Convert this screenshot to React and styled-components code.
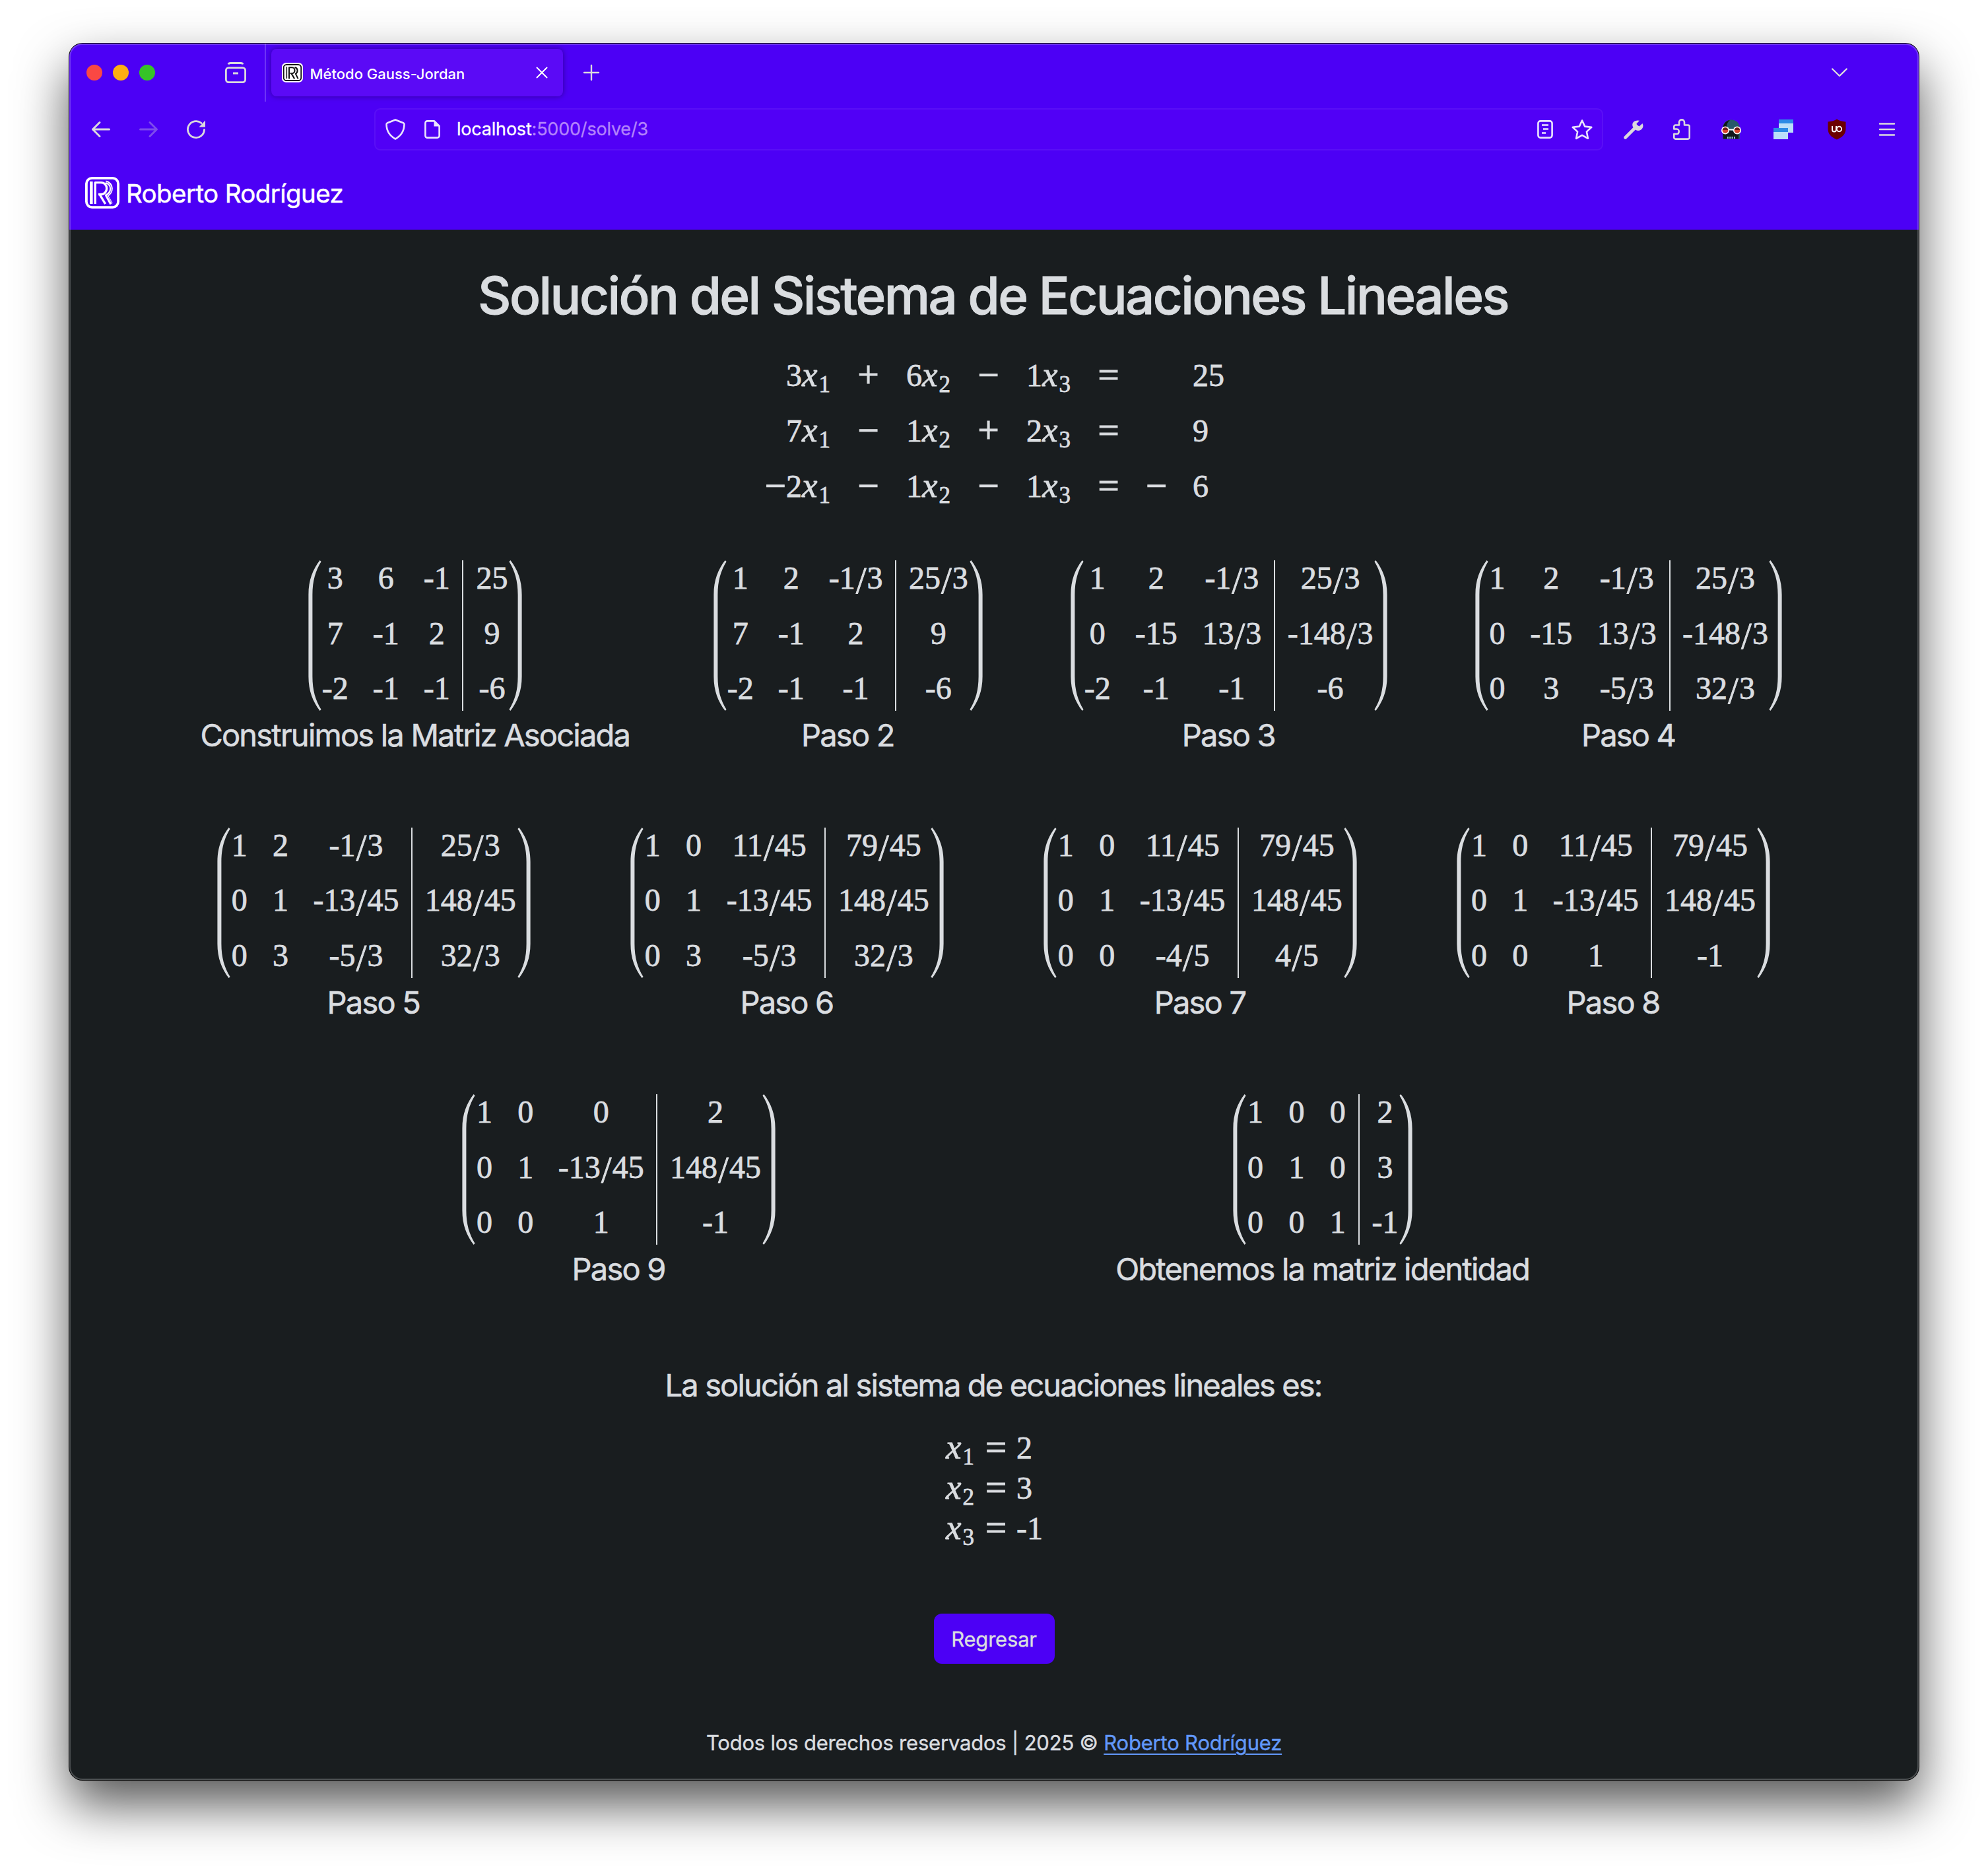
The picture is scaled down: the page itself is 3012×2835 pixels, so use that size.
import React from "react";
import styled, { createGlobalStyle, css } from "styled-components";

const GlobalStyle = createGlobalStyle`
  * { box-sizing: border-box; }
  html, body { margin: 0; padding: 0; background: #fff; }
  body { width: 3012px; height: 2835px; overflow: hidden; }
`;

const sans = css`font-family: Inter, "Liberation Sans", sans-serif;`;
const serif = css`font-family: "Liberation Serif", serif;`;
const purple = "#4c00f5";
const ink = "#dadde0";

/* ---------- window ---------- */
const Desktop = styled.div`
  width: 3012px;
  height: 2835px;
  padding: 66px 105px 138px;
`;
const Window = styled.div`
  position: relative;
  width: 2802px;
  height: 2631px;
  display: flex;
  flex-direction: column;
  border-radius: 20px;
  background: #191d1f;
  box-shadow: 0 0 0 1px #000, 0 37px 78px rgba(0, 0, 0, 0.67);
  ${sans}
  &::after {
    content: "";
    position: absolute;
    inset: 0;
    border-radius: 20px;
    box-shadow: inset 0 0 0 2px rgba(255, 255, 255, 0.22);
    pointer-events: none;
  }
`;
const Chrome = styled.header`
  background: ${purple};
  border-radius: 20px 20px 0 0;
  height: 170px;
`;
const TabStrip = styled.div`
  height: 88px;
  display: flex;
  align-items: center;
  padding: 0 108px 0 26px;
`;
const Lights = styled.div`
  display: flex;
  gap: 16px;
`;
const Light = styled.span`
  width: 24px;
  height: 24px;
  border-radius: 50%;
  background: ${(p) => p.$color};
`;
const Separator = styled.span`
  width: 2px;
  height: 88px;
  margin: 0 8px 0 28px;
  background: rgba(255, 255, 255, 0.2);
`;
const Tab = styled.div`
  width: 442px;
  height: 72px;
  display: flex;
  align-items: center;
  padding: 0 24px 0 16px;
  border-radius: 8px;
  background: #5b0af6;
  box-shadow: 0 0 8px rgba(0, 0, 0, 0.38);
  color: #fff;
  font-size: 22px;
  font-weight: 500;
`;
const TabTitle = styled.span`
  flex: 1;
  margin-left: 10.5px;
  line-height: 28px;
  padding-top: 3px;
`;
const Toolbar = styled.div`
  height: 84px;
  display: flex;
  align-items: center;
  padding: 0 36px 0 34px;
`;
const AddressBar = styled.div`
  width: 1862px;
  height: 64px;
  margin-left: 256px;
  display: flex;
  align-items: center;
  padding: 0 14px 0 15px;
  border: 2px solid #5a0ff6;
  border-radius: 9px;
  background: #5100f6;
`;
const Url = styled.span`
  flex: 1;
  margin-left: 25px;
  font-size: 27px;
  line-height: 36px;
  color: #b384fb;
  letter-spacing: -0.2px;
  white-space: nowrap;
  -webkit-text-stroke: 0.3px currentColor;
`;
const Host = styled.span`
  color: #fff;
`;
const Icon = styled.svg`
  display: block;
  flex: none;
  width: ${(p) => p.$w}px;
  height: ${(p) => p.$h}px;
  margin-left: ${(p) => p.$left || 0};
  fill: none;
  stroke: ${(p) => p.$color || "#dcd9dd"};
  stroke-width: ${(p) => p.$stroke || 2.6};
  stroke-linecap: round;
  stroke-linejoin: round;
  opacity: ${(p) => p.$opacity || 1};
  overflow: visible;
`;
const Glyph = ({ w, h, children, ...rest }) => (
  <Icon viewBox={`0 0 ${w} ${h}`} $w={w} $h={h} {...rest}>{children}</Icon>
);

/* ---------- page ---------- */
const Navbar = styled.nav`
  height: 112px;
  display: flex;
  align-items: center;
  gap: 10px;
  padding-left: 24px;
  background: ${purple};
`;
const Brand = styled.span`
  color: #fff;
  font-size: 38.5px;
  line-height: 48px;
  letter-spacing: -0.6px;
  padding-top: 1px;
  -webkit-text-stroke: 0.5px #fff;
`;
const Main = styled.main`
  display: flex;
  flex-direction: column;
  align-items: center;
  color: ${ink};
`;
const Title = styled.h1`
  margin: 51.5px 0 31px;
  padding-right: 3px;
  font-size: 78px;
  line-height: 96px;
  font-weight: 500;
  letter-spacing: -2.55px;
  white-space: nowrap;
  -webkit-text-stroke: 0.9px ${ink};
`;
const System = styled.div`
  display: grid;
  grid-template-columns: 104px 111px 71px 111px 71px 111px 34px 87px;
  grid-auto-rows: 84px;
  line-height: 84px;
  margin-bottom: 70.5px;
  font-size: 48px;
  -webkit-text-stroke: 0.8px ${ink};
  ${serif}
`;
const Term = styled.span`
  white-space: nowrap;
  text-align: ${(p) => p.$align || "center"};
  padding-right: ${(p) => (p.$align === "right" ? 2 : 0)}px;
  padding-left: ${(p) => p.$pad || 0}px;
`;
const Sign = styled.span`
  font-size: 57px;
  line-height: 0;
  vertical-align: -2px;
  -webkit-text-stroke-width: 1.2px;
`;
const Var = styled.i`
  font-size: 53px;
  line-height: 0;
  letter-spacing: 2px;
`;
const Sub = styled.span`
  font-size: 35px;
  line-height: 0;
  vertical-align: -9px;
`;

const Steps = styled.section`
  width: 2640px;
  display: flex;
  flex-direction: column;
  gap: 110.5px;
`;
const StepRow = styled.div`
  display: flex;
  justify-content: space-evenly;
`;
const Step = styled.figure`
  margin: 0;
  display: flex;
  flex-direction: column;
  align-items: center;
`;
const Caption = styled.figcaption`
  margin-top: 8px;
  padding-right: 2px;
  font-size: 47px;
  line-height: 58px;
  letter-spacing: -1.78px;
  white-space: nowrap;
  -webkit-text-stroke: 0.6px ${ink};
`;
const MatrixBox = styled.div`
  height: 228px;
  display: flex;
  margin: 0 8.5px 0 7px;
  ${serif}
  font-size: 48px;
  -webkit-text-stroke: 0.8px ${ink};
`;
const Cells = styled.div`
  display: grid;
  grid-template-columns: ${(p) => p.$cols};
  grid-auto-rows: 53.6px;
  gap: 30.1px 38.4px;
  line-height: 53.6px;
`;
const Cell = styled.span`
  display: flex;
  justify-content: center;
  white-space: nowrap;
`;
const Slash = styled.span`
  font-size: 57px;
  margin: 4px 1px 0;
`;
const Rule = styled.span`
  width: 2px;
  margin: 0 19.2px;
  background: ${ink};
`;
const ParenSvg = styled.svg`
  width: 20px;
  height: 228px;
  fill: ${ink};
  stroke: none;
  margin: ${(p) => (p.$flip ? "0 0 0 2px" : "0 2px 0 0")};
  transform: ${(p) => (p.$flip ? "scaleX(-1)" : "none")};
`;
const Lead = styled.p`
  margin: 117.5px 0 35px;
  padding-right: 2px;
  font-size: 47px;
  line-height: 58px;
  letter-spacing: -1.85px;
  -webkit-text-stroke: 0.6px ${ink};
`;
const Answers = styled.div`
  width: 146px;
  font-size: 48px;
  line-height: 61.2px;
  -webkit-text-stroke: 0.8px ${ink};
  ${serif}
`;
const Answer = styled.div`
  display: grid;
  grid-template-columns: 60px 47px auto;
  height: 61.2px;
  white-space: nowrap;
`;
const Button = styled.button`
  ${sans}
  width: 183px;
  height: 76px;
  margin: 99px 0 96px;
  padding: 0;
  border: 0;
  border-radius: 12px;
  background: ${purple};
  color: ${ink};
  font-size: 31px;
  letter-spacing: -0.2px;
  -webkit-text-stroke: 0.4px ${ink};
`;
const Footer = styled.footer`
  font-size: 31px;
  line-height: 48px;
  letter-spacing: -0.2px;
  white-space: nowrap;
  -webkit-text-stroke: 0.4px currentColor;
`;
const Link = styled.a`
  color: #6298f9;
  text-decoration: underline;
  text-decoration-thickness: 2px;
  text-underline-offset: 5px;
`;

const Paren = ({ flip }) => (
  <ParenSvg viewBox="0 0 20 228" $flip={flip}>
    <path d="M17.6 0C7 14 0.4 30 0.4 52V176C0.4 198 7 214 17.6 228L19.6 226C11 212 6.4 197 6.4 176V52C6.4 31 11 16 19.6 2Z" />
  </ParenSvg>
);

const advance = { "-": 14.6, "/": 17.6 };
const measure = (t) => [...t].reduce((n, c) => n + (advance[c] || 24), 0);
const columns = (rows, from, to) => {
  const out = [];
  for (let i = from; i < to; i++) out.push(`${Math.max(...rows.map((r) => measure(r[i])))}px`);
  return out.join(" ");
};
const Entry = ({ text }) => {
  const [a, b] = text.split("/");
  return <Cell>{a}{b && <Slash>/</Slash>}{b}</Cell>;
};
const Matrix = ({ data }) => {
  const rows = data.split(";").map((r) => r.split(" "));
  return (
    <MatrixBox>
      <Paren />
      <Cells $cols={columns(rows, 0, 3)}>
        {rows.flatMap((r, i) => r.slice(0, 3).map((t, j) => <Entry key={`${i}${j}`} text={t} />))}
      </Cells>
      <Rule />
      <Cells $cols={columns(rows, 3, 4)}>
        {rows.map((r, i) => <Entry key={i} text={r[3]} />)}
      </Cells>
      <Paren flip />
    </MatrixBox>
  );
};

const steps = [
  [
    ["3 6 -1 25;7 -1 2 9;-2 -1 -1 -6", "Construimos la Matriz Asociada"],
    ["1 2 -1/3 25/3;7 -1 2 9;-2 -1 -1 -6", "Paso 2"],
    ["1 2 -1/3 25/3;0 -15 13/3 -148/3;-2 -1 -1 -6", "Paso 3"],
    ["1 2 -1/3 25/3;0 -15 13/3 -148/3;0 3 -5/3 32/3", "Paso 4"],
  ],
  [
    ["1 2 -1/3 25/3;0 1 -13/45 148/45;0 3 -5/3 32/3", "Paso 5"],
    ["1 0 11/45 79/45;0 1 -13/45 148/45;0 3 -5/3 32/3", "Paso 6"],
    ["1 0 11/45 79/45;0 1 -13/45 148/45;0 0 -4/5 4/5", "Paso 7"],
    ["1 0 11/45 79/45;0 1 -13/45 148/45;0 0 1 -1", "Paso 8"],
  ],
  [
    ["1 0 0 2;0 1 -13/45 148/45;0 0 1 -1", "Paso 9"],
    ["1 0 0 2;0 1 0 3;0 0 1 -1", "Obtenemos la matriz identidad"],
  ],
];

const equations = [
  ["3", "+", "6", "−", "1", "", "25"],
  ["7", "−", "1", "+", "2", "", "9"],
  ["−2", "−", "1", "−", "1", "−", "6"],
];

const Unknown = ({ n }) => <><Var>x</Var><Sub>{n}</Sub></>;

const Equation = ({ e }) => (
  <>
    <Term $align="right">
      {e[0].startsWith("−") ? <><Sign>−</Sign>{e[0].slice(1)}</> : e[0]}<Unknown n="1" />
    </Term>
    <Term><Sign>{e[1]}</Sign></Term>
    <Term $align="right">{e[2]}<Unknown n="2" /></Term>
    <Term><Sign>{e[3]}</Sign></Term>
    <Term $align="right">{e[4]}<Unknown n="3" /></Term>
    <Term><Sign>=</Sign></Term>
    <Term><Sign>{e[5]}</Sign></Term>
    <Term $align="left" $pad={38}>{e[6]}</Term>
  </>
);

const Monogram = () => (
  <>
    <path d="M7 7h4.6v34H7z" fill="currentColor" stroke="none" />
    <path d="M15.2 41V8.6H24C35.5 8.6 35.5 26.5 24 26.5H20M22.5 27.5L30.6 41" strokeLinecap="butt" strokeWidth="3.4" />
    <path d="M31 7.8C42 10 42 24 32.5 28.2L39.6 41" strokeLinecap="butt" strokeWidth="4.8" />
    <path d="M30 7.4C42 9.4 42 24.6 33.6 28L41 41" stroke={purple} strokeLinecap="butt" strokeWidth="0.7" />
  </>
);

const LogoIcon = styled(Icon)`
  color: ${(p) => p.$color};
`;
const FavIcon = () => (
  <LogoIcon viewBox="0 0 52 48" $w={32} $h={30} $color="#141414" $stroke="3.5">
    <rect x="0" y="0" width="52" height="48" rx="10" fill="#fff" stroke="none" />
    <rect x="4.5" y="4.5" width="43" height="39" rx="7" strokeWidth="3" />
    <path d="M12 10.5V38" strokeWidth="2.4" />
    <path d="M18 38V11.5H25C34 11.5 34 26 25 26H22M24 27L30.5 38" strokeWidth="3.4" />
    <path d="M33 11.5C40 14 40 23 34 27L39.5 38" strokeWidth="3.4" />
  </LogoIcon>
);

export default function App() {
  return (
    <>
      <GlobalStyle />
      <Desktop>
        <Window>
          <Chrome>
            <TabStrip>
              <Lights>
                <Light $color="#fa4843" />
                <Light $color="#fdaf13" />
                <Light $color="#36c327" />
              </Lights>
              <Glyph w={32} h={32} $left="106px" $stroke={2.8}>
                <path d="M5 3.5C5.5 2 6 1.5 8 1.5H24C26 1.5 26.5 2 27 3.5" strokeLinecap="butt" />
                <rect x="1.4" y="8.6" width="29.2" height="22" rx="4" />
                <path d="M12 17h8" strokeLinecap="butt" strokeWidth="3" />
              </Glyph>
              <Separator />
              <Tab>
                <FavIcon />
                <TabTitle>Método Gauss-Jordan</TabTitle>
                <Glyph w={16} h={16} $color="#fff" $stroke={2}>
                  <path d="M0.5 0.5L15.5 15.5M15.5 0.5L0.5 15.5" />
                </Glyph>
              </Tab>
              <Glyph w={24} h={24} $left="31px" $stroke={2.4}>
                <path d="M12 1v22M1 12h22" />
              </Glyph>
              <Glyph w={24} h={12} $left="auto" $stroke={2.4}>
                <path d="M1.2 0.5L12 11L22.8 0.5" />
              </Glyph>
            </TabStrip>
            <Toolbar>
              <Glyph w={28} h={24} $stroke={3}>
                <path d="M26.5 12H2M12 1.5L1.5 12L12 22.5" />
              </Glyph>
              <Glyph w={28} h={24} $left="44px" $opacity={0.35} $stroke={3}>
                <path d="M1.5 12H26M16 1.5L26.5 12L16 22.5" />
              </Glyph>
              <Glyph w={28} h={28} $left="44px" $stroke={2.8}>
                <path d="M26.5 14.5A12.5 12.5 0 1 1 22 4.5" />
                <path d="M28 0.5V10.5H18.5Z" fill="#dcd9dd" stroke="none" />
              </Glyph>
              <AddressBar>
                <Glyph w={30} h={32} $color="#ebe4fd">
                  <path d="M15 1.5L27 6.3C28 6.7 28.6 7.5 28.5 8.5C28.3 18 25 25 15 30.5C5 25 1.7 18 1.5 8.5C1.4 7.5 2 6.7 3 6.3Z" />
                </Glyph>
                <Glyph w={24} h={28} $left="29px" $color="#ebe4fd">
                  <path d="M4.5 1.4H15L22.6 9V23.5A3 3 0 0 1 19.6 26.6H4.5A3 3 0 0 1 1.4 23.5V4.5A3 3 0 0 1 4.5 1.4Z" />
                  <path d="M14.5 1V9.5H23Z" fill="#ebe4fd" stroke="none" />
                </Glyph>
                <Url><Host>localhost</Host>:5000/solve/3</Url>
                <Glyph w={24} h={28} $color="#ebe4fd">
                  <rect x="1.4" y="1.4" width="21.2" height="25.2" rx="3.5" />
                  <path d="M7 7.5h10M9 13.5h8M7 19.5h6" strokeLinecap="butt" />
                </Glyph>
                <Glyph w={32} h={31} $left="28px" $color="#ebe4fd">
                  <path d="M16 1.5L20.2 10.6L30.3 11.8L22.9 18.6L24.9 28.8L16 23.8L7.1 28.8L9.1 18.6L1.7 11.8L11.8 10.6Z" />
                </Glyph>
              </AddressBar>
              <Glyph w={30} h={29} $left="31px">
                <path d="M2.5 26.5L17 12" strokeWidth="4.6" />
                <path d="M21 0.5C13 1 12 7 14.5 11L18.5 15C23 17.5 29 15 29.5 8.500L28.5 5L23.5 9.5L20 7L19.5 5.5L24 0.8Z" fill="#dcd9dd" stroke="none" />
              </Glyph>
              <Glyph w={26} h={32} $left="45px">
                <path d="M3.5 9.5H9V5.5C9 0 17 0 17 5.5V9.5H22.5A2.2 2.2 0 0 1 24.7 11.7V28.3A2.2 2.2 0 0 1 22.5 30.6H3.5A2.2 2.2 0 0 1 1.3 28.3V23H5.5C9.8 23 9.8 15.5 5.5 15.5H1.3V11.7A2.2 2.2 0 0 1 3.5 9.5Z" />
              </Glyph>
              <Glyph w={32} h={30} $left="46px">
                <g stroke="none">
                  <path d="M3 17C2 5 9 0.5 16 0.5S30 5 29 17V29.5H3Z" fill="#27596a" />
                  <path d="M3 16C3 8 7 2 14 1C9 5 9 10 9 14L27 21V29.5H4Z" fill="#10171b" />
                  <circle cx="7" cy="16.5" r="6" fill="#fff" />
                  <circle cx="25" cy="16.5" r="6" fill="#fff" />
                  <circle cx="7" cy="16.5" r="4.4" fill="#d8452c" />
                  <circle cx="25" cy="16.5" r="4.4" fill="#d8452c" />
                  <path d="M2.7 16A4.4 4.4 0 0 1 11.3 16ZM20.7 16A4.4 4.4 0 0 1 29.3 16Z" fill="#6b1c1b" />
                  <path d="M12 14.5h8v2h-8z" fill="#fff" />
                  <path d="M10 26h1.8v3H10zM13.3 26h1.8v3h-1.800zM16.6 26h1.8v3h-1.800zM20 26h1.8v3H20z" fill="#9fd4dd" />
                </g>
              </Glyph>
              <Glyph w={30} h={30} $left="48px">
                <g stroke="none">
                  <path d="M8 0h22v20H8z" fill="#bbdff9" />
                  <path d="M8 0h22v6H8z" fill="#2b8be6" />
                  <path d="M0 13h22v17H0z" fill="#bbdff9" />
                  <path d="M0 13h22v6H0z" fill="#2b8be6" />
                </g>
              </Glyph>
              <Glyph w={28} h={32} $left="52px">
                <path d="M14 0.5C18 3.5 23 4 27.5 4.500V15C27.5 23 23 27.5 14 31.5C5 27.5 0.5 23 0.5 15V4.5C5 4 10 3.5 14 0.5Z" fill="#6c0000" stroke="none" />
                <path d="M7 11V16.5A3 3 0 0 0 13 16.5V11" stroke="#fff" strokeWidth="1.9" strokeLinecap="butt" />
                <circle cx="17.5" cy="15.5" r="3.7" stroke="#fff" strokeWidth="1.9" />
              </Glyph>
              <Glyph w={24} h={20} $left="50px" $stroke={2.4}>
                <path d="M1 1.5h22M1 10h22M1 18.5h22" />
              </Glyph>
            </Toolbar>
          </Chrome>

          <Navbar>
            <LogoIcon viewBox="0 0 52 48" $w={52} $h={48} $color="#fff">
              <rect x="1.9" y="1.9" width="48.2" height="44.2" rx="8.5" strokeWidth="3.8" />
              <Monogram />
            </LogoIcon>
            <Brand>Roberto Rodríguez</Brand>
          </Navbar>

          <Main>
            <Title>Solución del Sistema de Ecuaciones Lineales</Title>
            <System>
              {equations.map((e, i) => <Equation key={i} e={e} />)}
            </System>
            <Steps>
              {steps.map((row, i) => (
                <StepRow key={i}>
                  {row.map(([data, label]) => (
                    <Step key={label}>
                      <Matrix data={data} />
                      <Caption>{label}</Caption>
                    </Step>
                  ))}
                </StepRow>
              ))}
            </Steps>
            <Lead>La solución al sistema de ecuaciones lineales es:</Lead>
            <Answers>
              {["2", "3", "-1"].map((v, i) => (
                <Answer key={i}>
                  <span><Unknown n={i + 1} /></span>
                  <span><Sign>=</Sign></span>
                  <span>{v}</span>
                </Answer>
              ))}
            </Answers>
            <Button>Regresar</Button>
            <Footer>Todos los derechos reservados | 2025 © <Link>Roberto Rodríguez</Link></Footer>
          </Main>
        </Window>
      </Desktop>
    </>
  );
}
